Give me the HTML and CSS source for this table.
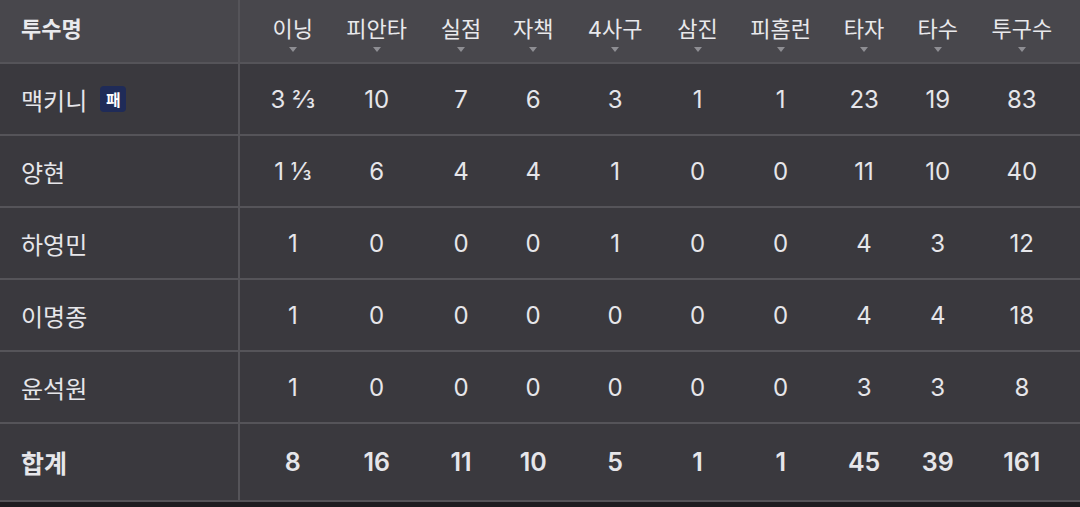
FILE: index.html
```html
<!DOCTYPE html>
<html lang="ko">
<head>
    <meta charset="UTF-8">
    <title>투수 기록</title>
    <link rel="stylesheet" href="styles.css">
</head>
<body>
    <div class="stats">
        <div class="row head">
            <div class="name">투수명</div>
            <div class="col">이닝<span class="sort"></span></div>
            <div class="col">피안타<span class="sort"></span></div>
            <div class="col">실점<span class="sort"></span></div>
            <div class="col">자책<span class="sort"></span></div>
            <div class="col">4사구<span class="sort"></span></div>
            <div class="col">삼진<span class="sort"></span></div>
            <div class="col">피홈런<span class="sort"></span></div>
            <div class="col">타자<span class="sort"></span></div>
            <div class="col">타수<span class="sort"></span></div>
            <div class="col">투구수<span class="sort"></span></div>
        </div>
        <div class="row">
            <div class="name">맥키니 <span class="badge">패</span></div>
            <div class="col">3 ⅔</div><div class="col">10</div><div class="col">7</div><div class="col">6</div><div class="col">3</div>
            <div class="col">1</div><div class="col">1</div><div class="col">23</div><div class="col">19</div><div class="col">83</div>
        </div>
        <div class="row">
            <div class="name">양현</div>
            <div class="col">1 ⅓</div><div class="col">6</div><div class="col">4</div><div class="col">4</div><div class="col">1</div>
            <div class="col">0</div><div class="col">0</div><div class="col">11</div><div class="col">10</div><div class="col">40</div>
        </div>
        <div class="row">
            <div class="name">하영민</div>
            <div class="col">1</div><div class="col">0</div><div class="col">0</div><div class="col">0</div><div class="col">1</div>
            <div class="col">0</div><div class="col">0</div><div class="col">4</div><div class="col">3</div><div class="col">12</div>
        </div>
        <div class="row">
            <div class="name">이명종</div>
            <div class="col">1</div><div class="col">0</div><div class="col">0</div><div class="col">0</div><div class="col">0</div>
            <div class="col">0</div><div class="col">0</div><div class="col">4</div><div class="col">4</div><div class="col">18</div>
        </div>
        <div class="row">
            <div class="name">윤석원</div>
            <div class="col">1</div><div class="col">0</div><div class="col">0</div><div class="col">0</div><div class="col">0</div>
            <div class="col">0</div><div class="col">0</div><div class="col">3</div><div class="col">3</div><div class="col">8</div>
        </div>
        <div class="row total">
            <div class="name">합계</div>
            <div class="col">8</div><div class="col">16</div><div class="col">11</div><div class="col">10</div><div class="col">5</div>
            <div class="col">1</div><div class="col">1</div><div class="col">45</div><div class="col">39</div><div class="col">161</div>
        </div>
    </div>
</body>
</html>
```

FILE: styles.css
```css
body {
    margin: 0;
    background: #1e1d21;
    font-family: Inter, "Noto Sans CJK KR", sans-serif;
    color: #e6e6ea;
}

.stats {
    width: 1080px;
    background: #3a393e;
}

.row {
    display: grid;
    grid-template-columns: 240px 94.6px 84.2px 78.4px 77px 82px 82.8px 83.4px 78.5px 78.8px 84.3px 1fr;
    height: 70px;
    border-bottom: 2px solid #555459;
    font-size: 24px;
}

.row > div {
    display: flex;
    align-items: center;
}

.name {
    padding-left: 21px;
    border-right: 2px solid #555459;
}

.col {
    justify-content: center;
}

/* nudge a few columns so their centres line up */
.row > :nth-child(2) { padding-left: 11px; }
.row > :nth-child(4) { padding-left: 6px; }
.row > :nth-child(5) { padding-right: 5px; }
.row > :nth-child(9) { padding-left: 5px; }
.row > :nth-child(10) { padding-right: 5px; }

.head {
    height: 62px;
    background: #48474c;
    font-size: 22px;
    line-height: 26px;
    color: #e9e9ec;
}

.head .name {
    font-weight: bold;
    padding-bottom: 4px;
}

.head .col {
    flex-direction: column;
    justify-content: flex-start;
    padding-top: 16px;
}

.sort {
    width: 0;
    height: 0;
    margin-top: 5px;
    border-left: 4.5px solid transparent;
    border-right: 4.5px solid transparent;
    border-top: 5px solid #8e8e93;
}

.badge {
    display: inline-flex;
    align-items: center;
    justify-content: center;
    width: 26px;
    height: 26px;
    margin-left: 13px;
    border-radius: 4px;
    background: #1f2b58;
    color: #fff;
    font-size: 16px;
    font-weight: bold;
}

.total {
    height: 76px;
    font-size: 25px;
    font-weight: 600;
}
```
